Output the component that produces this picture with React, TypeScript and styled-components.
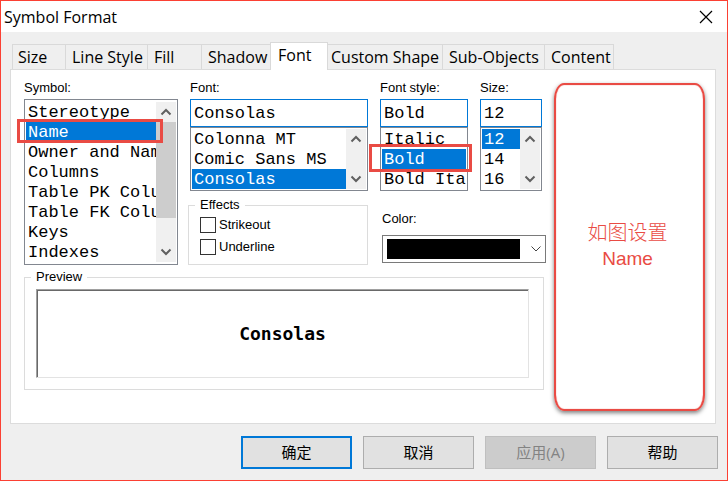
import React, { useState } from "react";
import styled, { createGlobalStyle, css } from "styled-components";

const uiFont = `"Open Sans", "Noto Sans CJK SC", sans-serif`;
const labelFont = `"Liberation Sans", Arial, sans-serif`;
const listFont = `"Liberation Mono", "Courier New", monospace`;
const accent = "#0078d7";
const mark = "#e94b44";

const GlobalStyle = createGlobalStyle`
  * { box-sizing: border-box; }
  body { margin: 0; background: #efefef; color: #000; }
  button, input, select { font: inherit; color: inherit; margin: 0; border-radius: 0; }
`;

const Dialog = styled.main`
  display: flex;
  flex-direction: column;
  min-height: 100vh;
  border: 1px solid #fb4033;
  background: #efefef;
  font-family: ${labelFont};
  font-size: 13px;
  line-height: 16px;
`;

const TitleBar = styled.header`
  display: flex;
  align-items: center;
  justify-content: space-between;
  height: 31px;
  padding: 0 12px 0 3px;
  background: #fff;
`;

const Title = styled.h1`
  margin: 0;
  font: 400 16px/24px ${uiFont};
`;

const CloseButton = styled.button`
  display: flex;
  align-items: center;
  padding: 2px;
  border: 0;
  background: none;
`;

const TabList = styled.div`
  display: flex;
  align-items: flex-end;
  height: 37px;
  padding: 0 11px;
  font: 400 16px/24px ${uiFont};
`;

const Tab = styled.button<{ $width: number; $active: boolean }>`
  flex: 0 1 ${(p) => p.$width}px;
  height: 25px;
  padding: 0 0 0 6px;
  border: 1px solid #d9d9d9;
  border-width: 1px 1px 0 0;
  background: #efefef;
  text-align: left;
  white-space: nowrap;
  &:first-child { border-left-width: 1px; padding-left: 5px; }
  &[aria-selected="true"] + & { padding-left: 3px; }
  ${(p) =>
    p.$active &&
    css`
      z-index: 1;
      height: 28px;
      margin: 0 0 -1px -1px;
      padding: 0 0 3px 7px;
      border-left-width: 1px;
      background: #fff;
    `}
`;

const Panel = styled.section`
  flex: 1;
  display: grid;
  grid-template-columns: 522fr 151fr;
  gap: 8px;
  margin: 0 11px 0 9px;
  padding: 10px 10px 12px 13px;
  border: 1px solid #dcdcdc;
  background: #fff;
`;

const Settings = styled.div`
  display: flex;
  flex-direction: column;
  gap: 4px;
  min-width: 0;
`;

const Columns = styled.div`
  display: grid;
  grid-template-columns: 154fr 358fr;
  gap: 10px;
`;

const FontArea = styled.div`
  display: flex;
  flex-direction: column;
  gap: 6px;
  min-width: 0;
`;

const FontFields = styled.div`
  display: grid;
  grid-template-columns: 178fr 88fr 62fr;
  gap: 12px;
  padding: 0 4px 0 2px;
`;

const Options = styled.div`
  display: grid;
  grid-template-columns: 180fr 164fr;
  gap: 14px;
`;

const Field = styled.div`
  display: flex;
  flex-direction: column;
  min-width: 0;
`;

const Label = styled.label`
  height: 19px;
  white-space: nowrap;
`;

const TextBox = styled.input`
  width: 100%;
  height: 28px;
  padding: 0 3px;
  border: 1px solid ${accent};
  outline: 0;
  background: #fff;
  font: 17px/20px ${listFont};
`;

const ListFrame = styled.div<{ $pad: number }>`
  display: flex;
  padding: ${(p) => p.$pad}px 1px;
  border: 1px solid #828790;
  background: #fff;
`;

const Items = styled.ul`
  flex: 1;
  min-width: 0;
  margin: 0;
  padding: 0;
  list-style: none;
  font: 17px/22px ${listFont};
`;

const Item = styled.li<{ $selected: boolean }>`
  position: relative;
  height: 20px;
  cursor: default;
  color: ${(p) => (p.$selected ? "#fff" : "#000")};
  background: ${(p) => (p.$selected ? accent : "transparent")};
`;

const ItemText = styled.span`
  display: block;
  padding-left: 2px;
  overflow: hidden;
  white-space: nowrap;
`;

const Highlight = styled.span<{ $inset: string }>`
  position: absolute;
  z-index: 1;
  inset: ${(p) => p.$inset};
  border: 3px solid ${mark};
  pointer-events: none;
`;

const Scrollbar = styled.div`
  display: flex;
  flex: 0 0 20px;
  flex-direction: column;
  background: #f0f0f0;
`;

const ScrollButton = styled.button`
  display: grid;
  place-items: center;
  height: 20px;
  padding: 0;
  border: 0;
  background: none;
`;

const Track = styled.div`
  flex: 1;
`;

const Thumb = styled.div`
  height: 80%;
  background: #cdcdcd;
`;

const Group = styled.fieldset`
  min-width: 0;
  margin: 0;
  border: 1px solid #dcdcdc;
`;

const EffectsGroup = styled(Group)`
  display: flex;
  flex-direction: column;
  gap: 6px;
  padding: 4px 11px 9px;
`;

const PreviewGroup = styled(Group)`
  margin-right: 2px;
  padding: 4px 14px 11px 11px;
`;

const Legend = styled.legend`
  margin-left: -5px;
  padding: 0 5px;
`;

const CheckLabel = styled.label`
  display: flex;
  align-items: center;
  gap: 3px;
`;

const CheckBox = styled.input`
  appearance: none;
  width: 16px;
  height: 16px;
  border: 1px solid #333;
  background: #fff;
  &:checked { background: #333; box-shadow: inset 0 0 0 3px #fff; }
`;

const ColorField = styled(Field)`
  padding-top: 14px;
`;

const ColorLabel = styled.label`
  height: 24px;
`;

const ColorBox = styled.div`
  display: grid;
  align-items: center;
  & > * { grid-area: 1 / 1; }
`;

const ColorSelect = styled.select`
  appearance: none;
  width: 100%;
  height: 28px;
  padding: 3px 25px 3px 4px;
  border: 1px solid #7a7a7a;
  background: #000;
  background-clip: content-box;
`;

const ColorArrow = styled.span`
  display: flex;
  justify-self: end;
  margin-right: 4px;
  pointer-events: none;
`;

const Preview = styled.div`
  display: grid;
  place-items: center;
  height: 89px;
  border: 1px solid;
  border-color: #a0a0a0 #e3e3e3 #e3e3e3 #a0a0a0;
  box-shadow: inset 1px 1px #696969;
  font: 700 18px/20px "DejaVu Sans Mono", monospace;
`;

const Note = styled.aside`
  display: flex;
  flex-direction: column;
  align-items: center;
  justify-content: center;
  margin-top: 3px;
  padding: 0 4px 2px 0;
  border: 2px solid ${mark};
  border-radius: 10px / 16px;
  box-shadow: 0 2px 4px rgba(0, 0, 0, 0.5), inset 0 0 1px ${mark};
  color: ${mark};
  font: 19px/26px "Liberation Sans", "Noto Sans CJK SC", sans-serif;
  text-align: center;
`;

const NoteLine = styled.span`
  font-size: 20px;
  font-weight: 300;
`;

const Footer = styled.footer`
  display: grid;
  grid-template-columns: repeat(4, 111px);
  justify-content: end;
  gap: 11px;
  padding: 12px 9px 11px;
`;

const ActionButton = styled.button<{ $primary?: boolean }>`
  height: 33px;
  padding: 0 0 2px;
  border: ${(p) => (p.$primary ? `2px solid ${accent}` : "1px solid #adadad")};
  background: #e1e1e1;
  font: 15px/20px ${uiFont};
  &:disabled { border-color: #bfbfbf; background: #ccc; color: #838383; }
`;

function Chevron({ up = false, thin = false }: { up?: boolean; thin?: boolean }) {
  return (
    <svg width="12" height="8" viewBox="0 0 12 8" fill="none" stroke={thin ? "#444" : "#606060"} strokeWidth={thin ? 1 : 2}>
      <path d={up ? "M1.5 6.5 6 2l4.5 4.5" : "M1.5 1.5 6 6l4.5-4.5"} />
    </svg>
  );
}

type ListProps = {
  label: string;
  items: string[];
  value: string;
  onChange: (value: string) => void;
  marked?: string;
  inset?: string;
  pad?: number;
  scroll?: boolean;
  thumb?: boolean;
};

function ListBox({ label, items, value, onChange, marked, inset = "0", pad = 1, scroll = true, thumb = false }: ListProps) {
  const step = (delta: number) => {
    const next = items[items.indexOf(value) + delta];
    if (next) onChange(next);
  };
  return (
    <ListFrame $pad={pad}>
      <Items
        role="listbox"
        aria-label={label}
        tabIndex={0}
        onKeyDown={(e) => {
          if (e.key === "ArrowDown") step(1);
          if (e.key === "ArrowUp") step(-1);
        }}
      >
        {items.map((item) => (
          <Item key={item} role="option" aria-selected={item === value} $selected={item === value} onClick={() => onChange(item)}>
            <ItemText>{item}</ItemText>
            {item === marked && <Highlight $inset={inset} />}
          </Item>
        ))}
      </Items>
      {scroll && (
        <Scrollbar>
          <ScrollButton type="button" aria-label="Scroll up" onClick={() => step(-1)}><Chevron up /></ScrollButton>
          <Track>{thumb && <Thumb />}</Track>
          <ScrollButton type="button" aria-label="Scroll down" onClick={() => step(1)}><Chevron /></ScrollButton>
        </Scrollbar>
      )}
    </ListFrame>
  );
}

const tabs = [
  { name: "Size", width: 54 },
  { name: "Line Style", width: 82 },
  { name: "Fill", width: 54 },
  { name: "Shadow", width: 69 },
  { name: "Font", width: 58 },
  { name: "Custom Shape", width: 115 },
  { name: "Sub-Objects", width: 102 },
  { name: "Content", width: 69 },
];

const symbols = ["Stereotype", "Name", "Owner and Nam", "Columns", "Table PK Colu", "Table FK Colu", "Keys", "Indexes"];
const fonts = ["Colonna MT", "Comic Sans MS", "Consolas"];
const styles = ["Italic", "Bold", "Bold Ita"];
const sizes = ["12", "14", "16"];

export default function App() {
  const [tab, setTab] = useState("Font");
  const [symbol, setSymbol] = useState("Name");
  const [font, setFont] = useState("Consolas");
  const [style, setStyle] = useState("Bold");
  const [size, setSize] = useState("12");

  return (
    <>
      <GlobalStyle />
      <Dialog>
        <TitleBar>
          <Title>Symbol Format</Title>
          <CloseButton type="button" aria-label="Close">
            <svg width="14" height="14" viewBox="0 0 14 14" stroke="#000" strokeWidth="1.2">
              <path d="M1 1l12 12M13 1L1 13" />
            </svg>
          </CloseButton>
        </TitleBar>
        <TabList role="tablist">
          {tabs.map(({ name, width }) => (
            <Tab key={name} type="button" role="tab" aria-selected={name === tab} $width={width} $active={name === tab} onClick={() => setTab(name)}>
              {name}
            </Tab>
          ))}
        </TabList>
        <Panel role="tabpanel" aria-label={tab}>
          <Settings>
            <Columns>
              <Field>
                <Label as="span">Symbol:</Label>
                <ListBox label="Symbol" items={symbols} value={symbol} onChange={setSymbol} marked="Name" inset="-3px -7px -1px -9px" pad={2} thumb />
              </Field>
              <FontArea>
                <FontFields>
                  <Field>
                    <Label htmlFor="font">Font:</Label>
                    <TextBox id="font" value={font} onChange={(e) => setFont(e.target.value)} />
                    <ListBox label="Fonts" items={fonts} value={font} onChange={setFont} />
                  </Field>
                  <Field>
                    <Label htmlFor="style">Font style:</Label>
                    <TextBox id="style" value={style} onChange={(e) => setStyle(e.target.value)} />
                    <ListBox label="Font styles" items={styles} value={style} onChange={setStyle} marked="Bold" inset="-5px -6px -3px -13px" scroll={false} />
                  </Field>
                  <Field>
                    <Label htmlFor="size">Size:</Label>
                    <TextBox id="size" value={size} onChange={(e) => setSize(e.target.value)} />
                    <ListBox label="Sizes" items={sizes} value={size} onChange={setSize} />
                  </Field>
                </FontFields>
                <Options>
                  <EffectsGroup>
                    <Legend>Effects</Legend>
                    <CheckLabel><CheckBox type="checkbox" />Strikeout</CheckLabel>
                    <CheckLabel><CheckBox type="checkbox" />Underline</CheckLabel>
                  </EffectsGroup>
                  <ColorField>
                    <ColorLabel htmlFor="color">Color:</ColorLabel>
                    <ColorBox>
                      <ColorSelect id="color" defaultValue="#000000">
                        <option value="#000000" />
                      </ColorSelect>
                      <ColorArrow><Chevron thin /></ColorArrow>
                    </ColorBox>
                  </ColorField>
                </Options>
              </FontArea>
            </Columns>
            <PreviewGroup>
              <Legend>Preview</Legend>
              <Preview>Consolas</Preview>
            </PreviewGroup>
          </Settings>
          <Note>
            <NoteLine lang="zh-CN">如图设置</NoteLine>
            <span>Name</span>
          </Note>
        </Panel>
        <Footer>
          <ActionButton type="button" $primary>确定</ActionButton>
          <ActionButton type="button">取消</ActionButton>
          <ActionButton type="button" disabled>应用(A)</ActionButton>
          <ActionButton type="button">帮助</ActionButton>
        </Footer>
      </Dialog>
    </>
  );
}
